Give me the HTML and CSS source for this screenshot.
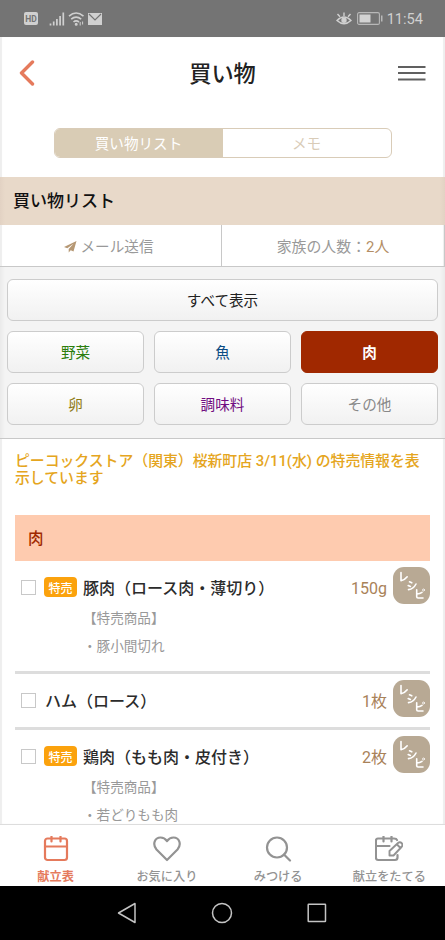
FILE: index.html
```html
<!DOCTYPE html>
<html lang="ja">
<head>
<meta charset="utf-8">
<title>買い物</title>
<link rel="stylesheet" href="styles.css">
</head>
<body>
<svg class="defs" width="0" height="0" aria-hidden="true">
  <symbol id="recipe-mark" viewBox="0 0 37 37">
    <g fill="none" stroke="#fff" stroke-width="1.600" stroke-linecap="round" stroke-linejoin="round">
      <path d="M8 5.500V13.700Q12 12.800 14.200 9.800"/>
      <path d="M16.500 14.800l2.300 1M15.200 18.500l2.200 1M15.500 22.600Q20.500 22 23 17"/>
      <path d="M23.700 22.700V29.800Q23.700 31 25 31H30M24 27Q27 26.700 29 25.300"/><circle cx="30.500" cy="23" r="1" stroke-width=".8"/>
    </g>
  </symbol>
</svg>
<div class="screen">
  <div class="status">
    <div class="status-left">
      <span class="hd">HD</span>
      <svg class="signal" width="16" height="16" viewBox="0 0 16 16" stroke="#d0d0d0" stroke-width="1.700"><path d="M1.500 14.500v-2M4.700 14.500v-4M7.900 14.500V8M11.100 14.500V5M14.300 14.500V1.500"/></svg>
      <svg class="wifi" width="18" height="16" viewBox="0 0 18 16" fill="none" stroke="#d0d0d0" stroke-width="1.600"><path d="M1 5.200Q8 -1.200 15.500 5.200M3.200 8.200Q8 4 13.200 8.200M5.500 11Q8 8.800 11 11"/><circle cx="8.200" cy="13.300" r=".7"/><path d="M12.200 11v3.500M14.600 10.500v3" stroke-width="1"/></svg>
      <svg width="14" height="12" viewBox="0 0 14 12"><path fill="#d0d0d0" d="M0 0h14v12H0z"/><path d="M1 1l6 6 6-6" fill="none" stroke="#747474" stroke-width="1.200"/></svg>
    </div>
    <div class="status-right">
      <svg width="16" height="14" viewBox="0 0 16 14" fill="none" stroke="#d0d0d0" stroke-width="1.400"><path d="M1 8.500Q8 1.500 15 8.500Q8 15 1 8.500zM8 4V.5M4 4.800L1.500 2M12 4.800L14.500 2"/><circle cx="8" cy="8.300" r="2" fill="#d0d0d0"/></svg>
      <svg class="battery" width="26" height="13" viewBox="0 0 26 13"><rect x=".6" y=".6" width="21.800" height="11.800" rx="1.500" fill="none" stroke="#b8b8b8" stroke-width="1.100"/><path fill="#d2d2d2" d="M2.500 2.500h11v8h-11z"/><path fill="#b8b8b8" d="M24 3.500h1.500v6H24z"/></svg>
      <span class="clock">11:54</span>
    </div>
  </div>

  <main class="page">
    <header class="header">
      <svg width="17" height="26" viewBox="0 0 17 26" fill="none" stroke="#e57a5c" stroke-width="3.400" stroke-linecap="round" stroke-linejoin="round"><path d="M14.500 2L3.500 13l11 11"/></svg>
      <h1 class="title">買い物</h1>
      <svg class="menu" width="28" height="16" viewBox="0 0 28 16" stroke="#606060" stroke-width="2"><path d="M0 2h27.500M0 8h27.500M0 14.500h27.500"/></svg>
    </header>

    <div class="segments">
      <div class="segment active">買い物リスト</div>
      <div class="segment">メモ</div>
    </div>

    <h2 class="section">買い物リスト</h2>
    <div class="actions">
      <div class="action mail"><svg width="13" height="12" viewBox="0 0 13 12"><path fill="#b69874" d="M12.500 0L0 6l3.300 1.300L9.500 2.800 4.700 8v3.500l2-2.300L9.500 10.500z"/></svg><span>メール送信</span></div>
      <div class="action family"><span>家族の人数：<b class="people">2人</b></span></div>
    </div>

    <div class="filters">
      <div class="filter all">すべて表示</div>
      <div class="filter veg">野菜</div>
      <div class="filter fish">魚</div>
      <div class="filter meat">肉</div>
      <div class="filter egg">卵</div>
      <div class="filter season">調味料</div>
      <div class="filter other">その他</div>
    </div>

    <div class="content">
      <p class="notice">ピーコックストア（関東）桜新町店 3/11(水) の特売情報を表示しています</p>
      <h3 class="category">肉</h3>
      <div class="item tall">
        <div class="row"><i class="box"></i><span class="sale">特売</span><span class="name">豚肉（ロース肉・薄切り）</span><span class="qty">150g</span><svg class="recipe"><use href="#recipe-mark"/></svg></div>
        <div class="sub">【特売商品】</div>
        <div class="sub">・豚小間切れ</div>
      </div>
      <div class="item">
        <div class="row"><i class="box"></i><span class="name">ハム（ロース）</span><span class="qty">1枚</span><svg class="recipe"><use href="#recipe-mark"/></svg></div>
      </div>
      <div class="item tall">
        <div class="row"><i class="box"></i><span class="sale">特売</span><span class="name">鶏肉（もも肉・皮付き）</span><span class="qty">2枚</span><svg class="recipe"><use href="#recipe-mark"/></svg></div>
        <div class="sub">【特売商品】</div>
        <div class="sub">・若どりもも肉</div>
      </div>
    </div>
  </main>

  <nav class="tabs">
    <div class="tab active">
      <svg width="28" height="26" viewBox="0 0 28 26"><rect x="3" y="2.500" width="22" height="21.500" rx="2.500"/><path d="M3 10.500h22M9.500 0.500v5M18.500 0.500v5"/></svg>
      <span>献立表</span>
    </div>
    <div class="tab">
      <svg width="28" height="26" viewBox="0 0 28 26"><path d="M14 24L3.500 13.500C-1 8 2 1.500 7.500 1.500Q11.500 1.500 14 5Q16.500 1.500 20.500 1.500C26 1.500 29 8 24.500 13.500z"/></svg>
      <span>お気に入り</span>
    </div>
    <div class="tab">
      <svg width="28" height="26" viewBox="0 0 28 26"><circle cx="13" cy="11.500" r="10"/><path d="M20 18.500l6 6"/></svg>
      <span>みつける</span>
    </div>
    <div class="tab">
      <svg width="28" height="26" viewBox="0 0 28 26"><path d="M22.500 19v2.500Q22.500 24 20 24H3Q.9 24 .9 21.500V5Q.9 2.500 3 2.500H19Q21.500 2.500 22 4M1 10h13.500M8.500 0.500v5M16.500 0.500v5"/><path d="M14.500 19.500v-4.500l8.500-8Q25 5.500 27 7.500Q28 9.500 26.500 11l-8 8.500zM22 8.500l3.500 3.500" stroke-width="1.900"/></svg>
      <span>献立をたてる</span>
    </div>
  </nav>

  <div class="android">
    <svg width="20" height="22" viewBox="0 0 20 22"><path d="M18 1.500v19L1.500 11z"/></svg>
    <svg width="22" height="22" viewBox="0 0 22 22"><circle cx="11" cy="11" r="9.500"/></svg>
    <svg width="20" height="20" viewBox="0 0 20 20"><rect x="1.200" y="1.200" width="17.300" height="17.300" rx=".5"/></svg>
  </div>
</div>
</body>
</html>
```
FILE: styles.css
```css
* { box-sizing: border-box; }
body {
  margin: 0;
  color: #333;
  font-family: Roboto, "Noto Sans CJK JP", sans-serif;
  font-size: 14.6px;
  line-height: 20px;
}
svg { display: block; flex: none; }
h1, h2, h3, p { margin: 0; }
.defs { position: absolute; }
.screen {
  display: flex;
  flex-direction: column;
  width: 445px;
  height: 940px;
  overflow: hidden;
  background: #fff;
}

.status {
  flex: none;
  display: flex;
  justify-content: space-between;
  align-items: center;
  height: 37px;
  padding: 0 22px 0 24px;
  background: #747474;
  color: #d0d0d0;
}
.status-left, .status-right { display: flex; align-items: center; }
.hd {
  width: 14px;
  height: 13px;
  border-radius: 2px;
  background: #d0d0d0;
  color: #747474;
  font-size: 8.5px;
  font-weight: 700;
  line-height: 14px;
  text-align: center;
}
.signal { margin-left: 11px; }
.wifi { margin: 0 2px 0 3px; }
.battery { margin: 0 4px 0 5px; }
.clock { font-size: 14.6px; line-height: 37px; padding-top: 1px; }

.page {
  flex: 1;
  min-height: 0;
  overflow: hidden;
  box-shadow: inset 2px 0 1px #eee, inset -2px 0 1px #eee;
}
.header {
  display: flex;
  justify-content: space-between;
  align-items: center;
  height: 72px;
  padding: 0 19px 0 18px;
}
.title { font-size: 22.2px; font-weight: 500; line-height: 30px; color: #222; margin-left: 12px; padding-top: 2px; }

.segments {
  display: flex;
  width: 338px;
  height: 30px;
  margin: 19px 0 19px 53.5px;
  border: 1px solid #d9ccb8;
  border-radius: 6px;
  overflow: hidden;
  line-height: 31px;
  text-align: center;
  color: #d9ccb8;
}
.segment { flex: 1; }
.segment.active { background: #d9ccb5; color: #fff; }

.section {
  height: 48px;
  padding-left: 13px;
  background: linear-gradient(90deg, #e2d2c3, #e8d9c9 5px, #e8d9c9 440px, #e2d2c3);
  color: #111;
  font-size: 17px;
  font-weight: 500;
  line-height: 49px;
}
.actions { display: flex; height: 42px; border-bottom: 1px solid #c8c8c8; }
.action {
  flex: 1;
  display: flex;
  align-items: center;
  justify-content: center;
  gap: 4px;
  padding-top: 2px;
  border-right: 1px solid #c8c8c8;
  color: #999;
}
.mail { flex: none; width: 222px; padding-right: 4px; }
.family { font-size: 14.9px; }
.people { color: #b38e65; font-weight: 400; }

.filters {
  display: grid;
  grid-template-columns: repeat(3, 1fr);
  grid-auto-rows: 42px;
  gap: 10px;
  height: 172px;
  padding: 12px 7px;
  background: linear-gradient(90deg, #eaeaea, #f4f4f4 5px, #f4f4f4 440px, #eaeaea);
  border-bottom: 1px solid #c8c8c8;
}
.filter {
  border: 1px solid #ccc;
  border-radius: 6px;
  background: linear-gradient(#fff, #f1f1f1);
  line-height: 43px;
  text-align: center;
}
.all { grid-column: 1 / -1; color: #222; }
.veg { color: #2b7d0c; }
.fish { color: #0c4c84; }
.meat { background: #a02800; border-color: #a02800; color: #fff; font-weight: 700; }
.egg { color: #8e7a14; }
.season { color: #710d82; }
.other { color: #888; }

.content { padding: 14px 15px 0; }
.notice { height: 62px; padding-right: 5px; color: #e5a520; font-size: 14.85px; font-weight: 500; line-height: 17px; }
.category {
  height: 46px;
  padding-left: 13px;
  background: #fecbaf;
  color: #a02800;
  font-size: 15.5px;
  font-weight: 500;
  line-height: 48px;
}
.item { height: 56px; padding-top: 6px; border-bottom: 3px solid #ddd; }
.item.tall { height: 113px; }
.row { display: flex; align-items: center; height: 37px; }
.box { width: 15px; height: 15px; margin: 3px 9px 0 6px; border: 1px solid #c8c8c8; }
.sale {
  width: 33px;
  height: 20px;
  margin: 2px 6px 0 -1px;
  border-radius: 4px;
  background: #fba20d;
  color: #fff;
  font-size: 12px;
  font-weight: 500;
  line-height: 24px;
  text-align: center;
}
.name { color: #2b2b2b; font-size: 16px; font-weight: 500; padding-top: 7px; }
.qty { margin-left: auto; padding-top: 7px; color: #a98259; font-size: 16px; }
.recipe { width: 37px; height: 37px; margin-left: 6px; border-radius: 11px; background: #b8a994; }
.sub { height: 28px; padding-left: 68px; color: #999; font-size: 13.6px; line-height: 28px; }

.tabs {
  flex: none;
  display: flex;
  height: 62px;
  border-top: 1px solid #ddd;
  background: #fff;
}
.tab {
  flex: 1;
  display: flex;
  flex-direction: column;
  align-items: center;
  gap: 5px;
  padding-top: 11px;
  color: #939393;
  font-size: 12.2px;
  font-weight: 500;
  line-height: 20px;
  white-space: nowrap;
}
.tab.active { color: #e57a5c; font-weight: 700; }
.tab svg { fill: none; stroke: currentColor; stroke-width: 2.2; stroke-linecap: round; stroke-linejoin: round; }
.android {
  flex: none;
  display: flex;
  align-items: center;
  justify-content: center;
  gap: 74px;
  height: 54px;
  padding-right: 1px;
  background: #000;
}
.android svg { fill: none; stroke: #c4c4c4; stroke-width: 1.5; stroke-linejoin: round; }
```
